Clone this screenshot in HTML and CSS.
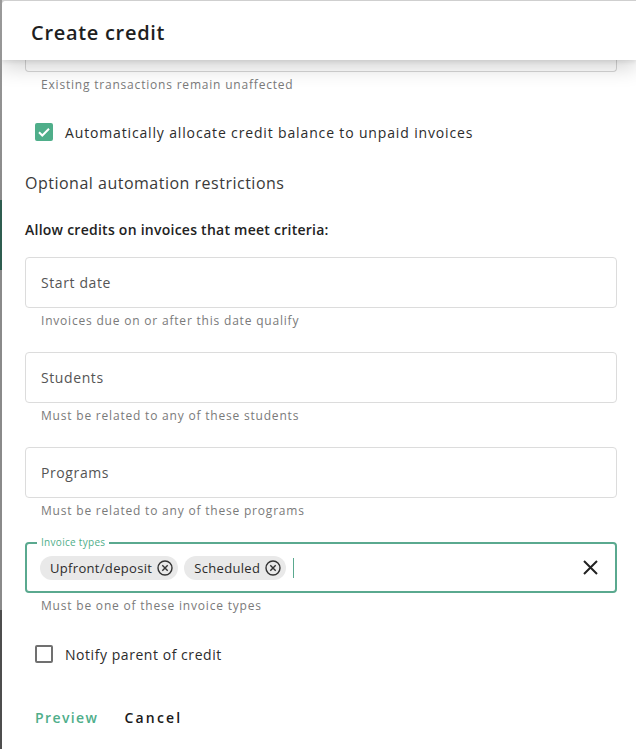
FILE: index.html
```html
<!DOCTYPE html>
<html lang="en">
<head>
<meta charset="utf-8">
<title>Create credit</title>
<link rel="stylesheet" href="styles.css">
</head>
<body>
<div class="page">
  <div class="backdrop-strip"></div>
  <div class="dialog">
    <header class="dialog-header">
      <h2 class="dialog-title">Create credit</h2>
    </header>
    <div class="dialog-content">
      <div class="field-tail"></div>
      <p class="helper">Existing transactions remain unaffected</p>

      <label class="check-row">
        <span class="checkbox checked">
          <svg viewBox="0 0 18 18" width="18" height="18"><path d="M4 9.2l3.3 3.3L14 5.8" fill="none" stroke="#fff" stroke-width="2"/></svg>
        </span>
        <span class="check-label">Automatically allocate credit balance to unpaid invoices</span>
      </label>

      <h3 class="section-title">Optional automation restrictions</h3>
      <p class="criteria">Allow credits on invoices that meet criteria:</p>

      <div class="field"><span class="field-label">Start date</span></div>
      <p class="helper gap">Invoices due on or after this date qualify</p>

      <div class="field"><span class="field-label">Students</span></div>
      <p class="helper gap">Must be related to any of these students</p>

      <div class="field"><span class="field-label">Programs</span></div>
      <p class="helper gap">Must be related to any of these programs</p>

      <div class="field focused">
        <span class="float-label">Invoice types</span>
        <div class="chips">
          <span class="chip">Upfront/deposit
            <svg class="chip-x" viewBox="0 0 16 16" width="16" height="16"><circle cx="8" cy="8" r="7" fill="none" stroke="#333" stroke-width="1.4"/><path d="M5.3 5.3l5.4 5.4M10.7 5.3l-5.4 5.4" stroke="#333" stroke-width="1.4"/></svg>
          </span>
          <span class="chip">Scheduled
            <svg class="chip-x" viewBox="0 0 16 16" width="16" height="16"><circle cx="8" cy="8" r="7" fill="none" stroke="#333" stroke-width="1.4"/><path d="M5.3 5.3l5.4 5.4M10.7 5.3l-5.4 5.4" stroke="#333" stroke-width="1.4"/></svg>
          </span>
          <span class="caret"></span>
        </div>
        <svg class="clear-x" viewBox="0 0 15 15" width="15" height="15"><path d="M1 1l13 13M14 1L1 14" stroke="#222" stroke-width="2"/></svg>
      </div>
      <p class="helper gap2">Must be one of these invoice types</p>

      <label class="check-row notify">
        <span class="checkbox"></span>
        <span class="check-label">Notify parent of credit</span>
      </label>

      <div class="actions">
        <button class="btn btn-primary">Preview</button>
        <button class="btn btn-plain">Cancel</button>
      </div>
    </div>
  </div>
</div>
</body>
</html>
```

FILE: styles.css
```css
* { box-sizing: border-box; }
html, body {
  margin: 0;
  padding: 0;
  height: 100%;
  background: #cfcfcf;
  font-family: "Open Sans", "Liberation Sans", sans-serif;
  overflow: hidden;
}
.page {
  display: flex;
  height: 749px;
}
.backdrop-strip {
  width: 2px;
  flex: 0 0 2px;
  background: linear-gradient(to bottom,
    #9a9a9a 0, #8a8a8a 200px,
    #2f5d50 200px, #2f5d50 270px,
    #8a8a8a 270px, #8a8a8a 610px,
    #4e4e4e 610px, #4e4e4e 749px);
}
.dialog {
  flex: 1;
  margin-top: 1px;
  background: #fff;
  border-top-left-radius: 4px;
  display: flex;
  flex-direction: column;
  overflow: hidden;
}
.dialog-header {
  height: 59px;
  flex: 0 0 59px;
  display: flex;
  align-items: center;
  padding-left: 29px;
  background: #fff;
  position: relative;
  z-index: 2;
  box-shadow: 0 8px 20px rgba(0, 0, 0, 0.17), 0 2px 4px rgba(0,0,0,0.08);
}
.dialog-title {
  margin: 0;
  font-size: 20px;
  font-weight: 600;
  color: #1f1f1f;
  letter-spacing: 0.7px;
  padding-top: 3px;
}
.dialog-content {
  padding: 0 19px 0 23px;
  display: flex;
  flex-direction: column;
}
.field-tail {
  height: 12px;
  border: 1px solid #d6d6d6;
  border-top: none;
  border-radius: 0 0 4px 4px;
}
.helper {
  margin: 3px 0 0;
  padding-left: 16px;
  font-size: 12px;
  line-height: 20px;
  color: #7a7a7a;
  letter-spacing: 0.8px;
}
.helper.gap { margin-bottom: 21px; }
.helper.gap2 { margin-bottom: 20px; }
.check-row {
  display: flex;
  align-items: center;
  height: 36px;
  margin-top: 19px;
  padding-left: 10px;
}
.check-row.notify { margin-top: 0; }
.checkbox {
  width: 18px;
  height: 18px;
  border: 2px solid #707070;
  border-radius: 2px;
  display: flex;
  align-items: center;
  justify-content: center;
  flex: 0 0 18px;
}
.checkbox.checked {
  background: #4fae8a;
  border-color: #4fae8a;
}
.checkbox.checked svg { flex: 0 0 18px; }
.check-label {
  margin-left: 12px;
  font-size: 14px;
  color: #2c2c2c;
  letter-spacing: 0.85px;
}
.notify .check-label { letter-spacing: 0.55px; }
.section-title {
  margin: 21px 0 0;
  font-size: 16px;
  line-height: 24px;
  font-weight: 400;
  color: #3a3a3a;
  letter-spacing: 0.5px;
}
.criteria {
  margin: 25px 0 17px;
  font-size: 14px;
  line-height: 20px;
  font-weight: 600;
  color: #222;
  letter-spacing: 0.25px;
}
.field {
  height: 51px;
  border: 1px solid #dcdcdc;
  border-radius: 4px;
  display: flex;
  align-items: center;
  padding-left: 15px;
}
.field-label {
  font-size: 14px;
  color: #555;
  letter-spacing: 0.6px;
}
.field.focused {
  position: relative;
  border: 2px solid #5aa98f;
  height: 51px;
  padding-left: 13px;
  padding-right: 17px;
  justify-content: space-between;
}
.float-label {
  position: absolute;
  top: -8px;
  left: 10px;
  padding: 0 4px;
  background: #fff;
  font-size: 10px;
  line-height: 12px;
  color: #4fae8a;
  letter-spacing: 0.3px;
}
.chips {
  display: flex;
  align-items: center;
  gap: 6px;
}
.chip {
  display: inline-flex;
  align-items: center;
  height: 24px;
  padding: 0 5px 0 10px;
  background: #e9e9e9;
  border-radius: 12px;
  font-size: 13px;
  color: #2c2c2c;
  letter-spacing: 0.32px;
}
.chip-x { margin-left: 5px; }
.caret {
  width: 1px;
  height: 20px;
  background: #5aa98f;
  margin-left: 1px;
}
.actions {
  display: flex;
  gap: 10px;
  margin-top: 27px;
  padding-left: 2px;
}
.btn {
  height: 36px;
  padding: 0 8px;
  background: none;
  border: none;
  font-family: inherit;
  font-size: 14px;
  font-weight: 600;
  letter-spacing: 1.4px;
  cursor: pointer;
}
.btn-primary { color: #4fae8a; }
.btn-plain { color: #1a1a1a; letter-spacing: 2.2px; }
```
